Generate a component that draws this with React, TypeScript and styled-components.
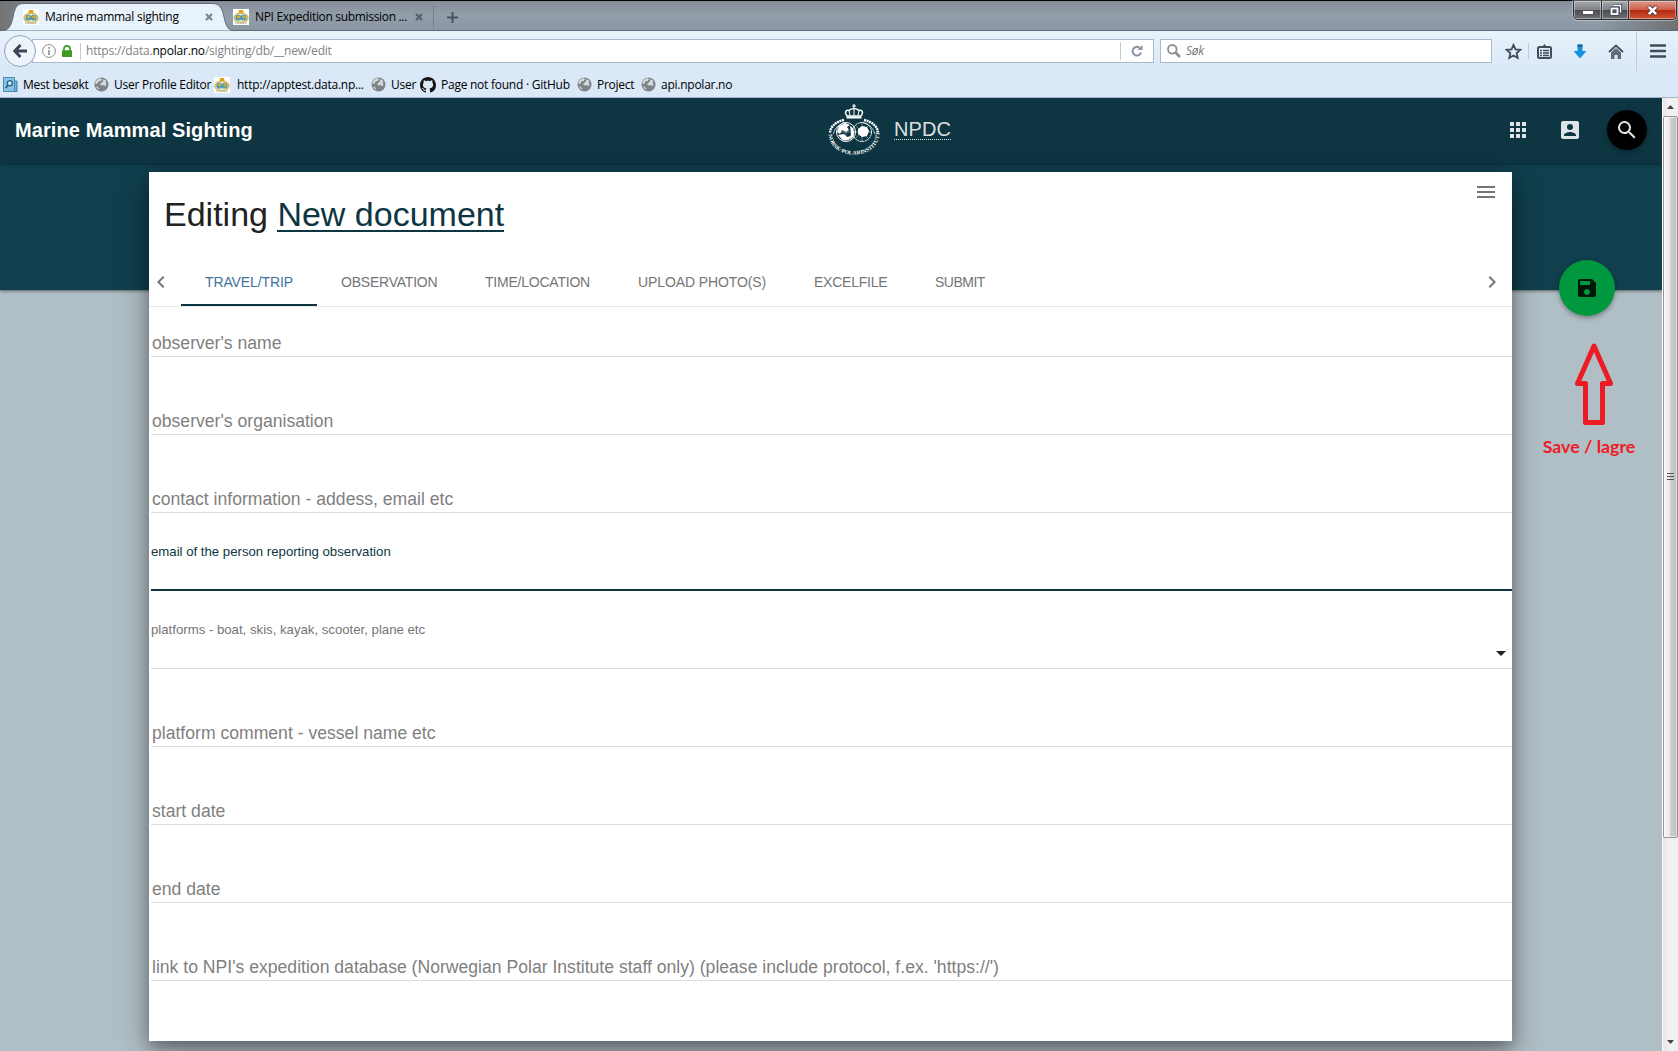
import React from "react";
import styled, { createGlobalStyle, css } from "styled-components";

const Global = createGlobalStyle`
  * { box-sizing: border-box; }
  body { margin: 0; overflow: hidden; background: #b0bec5; }
`;

const UI = `"Open Sans", "Noto Sans", sans-serif`;
const ARIAL = `"Liberation Sans", Arial, sans-serif`;

const Screen = styled.div`
  width: 1678px;
  height: 1051px;
  display: flex;
  flex-direction: column;
  font-family: ${ARIAL};
  overflow: hidden;
`;

/* ---------- browser chrome ---------- */

const TitleBar = styled.div`
  height: 31px;
  flex: none;
  display: flex;
  border-top: 1px solid #000;
  border-bottom: 1px solid #5d6b78;
  background: linear-gradient(90deg, rgba(110, 110, 110, 0.9) 0, rgba(110, 110, 110, 0) 50px, rgba(110, 110, 110, 0) 1600px, rgba(105, 105, 105, 0.85) 1678px),
    linear-gradient(#858f99, #929eaa 50%, #8b97a3);
`;

const TabShape = styled.svg`
  position: absolute;
  left: 0;
  top: 1px;
`;

const BrowserTab = styled.div<{ $w: number; $pad: number }>`
  position: relative;
  width: ${(p) => p.$w}px;
  padding: 2px 0 0 ${(p) => p.$pad}px;
  height: 29px;
  display: flex;
  align-items: center;
  flex: none;
`;

const ChromeText = styled.span<{ $w?: number; $ls?: number }>`
  position: relative;
  font: 12px/16px ${UI};
  letter-spacing: ${(p) => p.$ls ?? -0.25}px;
  color: #000;
  white-space: pre;
  ${(p) => p.$w && css`width: ${p.$w}px;`}
`;

const TabLabel = styled(ChromeText)`
  margin-left: 6px;
`;

const Glyph = styled.svg`
  display: block;
  flex: none;
  position: relative;
`;

const TabSeparator = styled.div`
  width: 1px;
  height: 22px;
  margin: 5px 13px 0 0;
  background: #74808b;
`;

const NewTab = styled.div`
  display: flex;
  align-items: center;
  height: 29px;
  padding-top: 3px;
`;

const WindowButtons = styled.div`
  display: flex;
  margin-left: auto;
  margin-right: 1px;
  width: 104px;
  height: 19px;
  border: 1px solid #2b2d33;
  border-top: 0;
  border-radius: 0 0 5px 5px;
  overflow: hidden;
  box-shadow: 0 0 0 1px rgba(255, 255, 255, 0.35);
`;

const WindowButton = styled.div<{ $w: number; $close?: boolean; $low?: boolean }>`
  width: ${(p) => p.$w}px;
  padding-top: ${(p) => (p.$low ? 4 : 0)}px;
  display: flex;
  align-items: center;
  justify-content: center;
  box-shadow: inset 0 0 0 1px rgba(255, 255, 255, 0.4);
  border-right: ${(p) => (p.$close ? "0" : "1px solid #2b2d33")};
  background: ${(p) =>
    p.$close
      ? "linear-gradient(#dc9a8c, #cf5f48 48%, #b72a10 52%, #cf5533)"
      : "linear-gradient(#a4a7ab, #80848a 48%, #4a4c50 52%, #6f7173)"};
`;

const NavArea = styled.div`
  height: 67px;
  flex: none;
  border-bottom: 1px solid #9fb3c9;
  background: linear-gradient(#e8f2fb, #dae8f7 60%);
`;

const NavRow = styled.div`
  height: 40px;
  display: flex;
  align-items: center;
  padding-left: 4px;
`;

const BackButton = styled.div`
  position: relative;
  z-index: 1;
  width: 32px;
  height: 32px;
  border-radius: 50%;
  border: 1px solid #8fa5c0;
  background: #edf4fc;
  display: flex;
  align-items: center;
  justify-content: center;
  flex: none;
`;

const UrlBar = styled.div`
  width: 1122px;
  height: 24px;
  margin-left: -4px;
  padding-left: 9px;
  display: flex;
  align-items: center;
  background: #fff;
  border: 1px solid #a8bace;
  flex: none;
`;

const Divider = styled.div<{ $h: number; $l: number; $r: number }>`
  width: 1px;
  height: ${(p) => p.$h}px;
  margin: 0 ${(p) => p.$r}px 0 ${(p) => p.$l}px;
  background: #c3cad2;
  flex: none;
`;

const UrlText = styled(ChromeText)`
  color: #7f7f7f;
  width: 959px;
  b { font-weight: 400; color: #000; }
`;

const SearchBox = styled.div`
  width: 332px;
  height: 24px;
  margin-left: 6px;
  padding-left: 6px;
  display: flex;
  align-items: center;
  gap: 5px;
  background: #fff;
  border: 1px solid #a8bace;
  flex: none;
`;

const SearchHint = styled(ChromeText)`
  font-style: italic;
  color: #757575;
`;

const NavIcon = styled.div<{ $w: number }>`
  width: ${(p) => p.$w}px;
  display: flex;
  justify-content: center;
  flex: none;
`;

const BookmarkRow = styled.div`
  height: 26px;
  display: flex;
  align-items: center;
  padding: 1px 0 0 3px;
`;

const Bookmark = styled.div<{ $w: number; $gap?: number }>`
  width: ${(p) => p.$w}px;
  display: flex;
  align-items: center;
  gap: ${(p) => p.$gap ?? 5}px;
  flex: none;
`;

/* ---------- page ---------- */

const Viewport = styled.div`
  flex: 1;
  display: flex;
  min-height: 0;
`;

const Page = styled.div`
  position: relative;
  width: 1662px;
  display: flex;
  flex-direction: column;
  background: #b0bec5;
  overflow: hidden;
`;

const Band = styled.div`
  position: absolute;
  left: 0;
  right: 0;
  top: 0;
  height: 192px;
  background: #103f4d;
  box-shadow: 0 1px 3px rgba(0, 0, 0, 0.5);
`;

const Toolbar = styled.header`
  position: relative;
  height: 65px;
  flex: none;
  display: flex;
  align-items: center;
  background: #0d3642;
  box-shadow: 0 1px 3px rgba(0, 0, 0, 0.45);
  padding: 0 4px 2px 15px;
`;

const AppTitle = styled.h1`
  margin: 0;
  width: 813px;
  font: 700 20px/24px ${ARIAL};
  letter-spacing: 0.1px;
  color: #fff;
`;

const Brand = styled.a`
  margin-left: 14px;
  height: 21px;
  font: 20px/21px ${ARIAL};
  letter-spacing: 0.1px;
  color: rgba(255, 255, 255, 0.87);
  border-bottom: 1px dotted rgba(255, 255, 255, 0.87);
`;

const ToolbarActions = styled.div`
  margin-left: auto;
  display: flex;
  align-items: center;
`;

const ActionSlot = styled.div<{ $w: number }>`
  width: ${(p) => p.$w}px;
  display: flex;
  justify-content: center;
`;

const SearchFab = styled.div`
  width: 40px;
  height: 40px;
  border-radius: 50%;
  background: #000;
  display: flex;
  align-items: center;
  justify-content: center;
  box-shadow: 0 2px 5px rgba(0, 0, 0, 0.3);
`;

const Card = styled.main`
  position: relative;
  width: 1363px;
  height: 869px;
  margin: 9px 0 0 149px;
  background: #fff;
  box-shadow: 0 6px 12px rgba(0, 0, 0, 0.2), 0 10px 28px rgba(0, 0, 0, 0.38);
`;

const CardHead = styled.div`
  display: flex;
  justify-content: space-between;
  height: 86px;
  padding: 0 14px 0 15px;
`;

const Heading = styled.h2`
  margin: 22px 0 0;
  font: 400 34px/40px ${ARIAL};
  color: #212121;
`;

const DocLink = styled.a`
  display: inline-block;
  height: 38px;
  line-height: 40px;
  vertical-align: top;
  color: #0d3642;
  border-bottom: 2px solid #0d3642;
`;

const MenuSlot = styled.div`
  margin-top: 8px;
`;

const TabBar = styled.nav`
  display: flex;
  align-items: stretch;
  height: 49px;
  border-bottom: 1px solid #e8e8e8;
`;

const Pager = styled.div<{ $end?: boolean }>`
  width: 32px;
  display: flex;
  align-items: center;
  ${(p) => p.$end && css`margin-left: auto;`}
`;

const FormTab = styled.div<{ $w: number; $ls: number; $active?: boolean }>`
  width: ${(p) => p.$w}px;
  padding-left: 24px;
  font: 14px/48px ${ARIAL};
  letter-spacing: ${(p) => p.$ls}px;
  white-space: nowrap;
  color: ${(p) => (p.$active ? "#40739e" : "#757575")};
  ${(p) => p.$active && css`box-shadow: inset 0 -2px #0d3642;`}
`;

const Fields = styled.div`
  padding-left: 2px;
  margin-top: -28px;
`;

const Field = styled.label<{ $kind?: string }>`
  display: flex;
  height: 78px;
  flex-direction: column;
  justify-content: flex-end;
  padding: 0 0 3px 1px;
  border-bottom: 1px solid #dedede;
  font: 17.6px/20px ${ARIAL};
  color: #7f7f7f;
  ${(p) =>
    p.$kind &&
    css`
      justify-content: flex-start;
      padding: 29px 0 0;
      font-size: 13.2px;
      line-height: 20px;
      color: #757575;
    `}
  ${(p) =>
    p.$kind === "focus" &&
    css`
      color: #0d3642;
      box-shadow: inset 0 -1px #0d3642;
      border-bottom-color: #0d3642;
    `}
`;

const Caret = styled.div`
  align-self: flex-end;
  margin: 11px 6px 0 0;
  border: 5px solid transparent;
  border-top-color: #212121;
  border-bottom: 0;
`;

const SaveFab = styled.div`
  position: absolute;
  left: 1559px;
  top: 162px;
  width: 56px;
  height: 56px;
  border-radius: 50%;
  background: #00983e;
  display: flex;
  align-items: center;
  justify-content: center;
  box-shadow: 0 2px 5px rgba(0, 0, 0, 0.35);
`;

const Note = styled.div`
  position: absolute;
  left: 1540px;
  top: 242px;
  width: 108px;
  display: flex;
  flex-direction: column;
  align-items: center;
  font: 700 17.8px/22px Lato, sans-serif;
  color: #ed1c24;
  white-space: nowrap;
`;

const NoteText = styled.span`
  margin: 9px 10px 0 0;
`;

const ScrollTrack = styled.div`
  width: 16px;
  border-left: 1px solid #fff;
  background: linear-gradient(90deg, #e6e6e6, #f1f1f1 40%);
  display: flex;
  flex-direction: column;
`;

const ScrollArrow = styled.div<{ $down?: boolean }>`
  height: 18px;
  display: flex;
  align-items: center;
  justify-content: center;
  ${(p) => p.$down && css`margin-top: auto;`}
`;

const ScrollThumb = styled.div`
  height: 722px;
  border: 1px solid #95959a;
  border-radius: 2px;
  background: linear-gradient(90deg, #f7f7f7, #e9e9eb 45%, #d0d0d4 50%, #bcbcc1);
  box-shadow: inset 0 0 0 1px rgba(255, 255, 255, 0.5);
  display: flex;
  align-items: center;
  justify-content: center;
`;

/* ---------- icons ---------- */

const Favicon = () => (
  <Glyph width="16" height="16" viewBox="0 0 16 16">
    <rect width="16" height="16" fill="#fff" />
    <path d="M6 1h4l.6 3H5.4z" fill="#d9a520" />
    <ellipse cx="8" cy="9" rx="7" ry="4.9" fill="#dfe5d2" stroke="#d8b548" strokeWidth="1.3" />
    <circle cx="5.3" cy="8.7" r="2.9" fill="#3f97c4" />
    <circle cx="10.7" cy="8.7" r="2.9" fill="#3f97c4" />
    <path d="M3.6 7.5l3-1 .6 2-2 1zM9 8l2.6-1.6 1.4 2-2 1.2zM4.6 10.4l2 .6M9.6 11l2-.8" fill="#d6b02c" stroke="#d6b02c" strokeWidth=".5" />
    <path d="M2 14.3h12" stroke="#aaa" strokeDasharray="1.5 1" />
  </Glyph>
);

const Globe = () => (
  <Glyph width="15" height="15" viewBox="0 0 15 15">
    <circle cx="7.5" cy="7.5" r="7" fill="#7f8386" />
    <path d="M1.300 7C1.300 4 4 1.300 7 1.300L8 2.500 6.500 4 4.500 4.500 3.500 6.500zM9.500 2l3 2-1 1.500 1 1-1 3-2-1.500-2 .5L6 7l2.500-2zM2 9.500l2 .5 1.500 2.500C4 12.500 2.500 11 2 9.500z" fill="#d3d9de" />
  </Glyph>
);

const GitHub = () => (
  <Glyph width="16" height="16" viewBox="0 0 16 16">
    <path
      fill="#161514"
      d="M8 0C3.580 0 0 3.580 0 8c0 3.540 2.290 6.530 5.470 7.590.4.070.55-.17.55-.38 0-.19-.01-.82-.01-1.490-2.010.37-2.530-.49-2.690-.94-.09-.23-.48-.94-.82-1.130-.28-.15-.68-.52-.01-.53.63-.01 1.080.58 1.230.82.72 1.210 1.870.87 2.330.66.07-.52.28-.87.51-1.070-1.780-.2-3.640-.89-3.640-3.950 0-.87.31-1.590.82-2.150-.08-.2-.36-1.020.08-2.120 0 0 .67-.21 2.200.82.64-.18 1.320-.27 2-.27s1.360.09 2 .27c1.530-1.040 2.200-.82 2.200-.82.44 1.100.16 1.920.08 2.120.51.56.82 1.270.82 2.150 0 3.070-1.870 3.750-3.650 3.950.29.25.54.73.54 1.480 0 1.070-.01 1.930-.01 2.200 0 .21.15.46.55.38A8.010 8.010 0 0 0 16 8c0-4.420-3.580-8-8-8z"
    />
  </Glyph>
);

const MostVisited = () => (
  <Glyph width="15" height="16" viewBox="0 0 15 16">
    <path d="M11 4h3v10.500h-3z" fill="#6fb0d4" stroke="#3e7fa8" />
    <path d="M.5.5h11v14H.5z" fill="#8cc3e2" stroke="#4a8ab3" />
    <circle cx="6.800" cy="6.300" r="2.600" fill="#c7e4f4" stroke="#235f8a" strokeWidth="1.300" />
    <path d="M5 8.300L2.600 11" stroke="#235f8a" strokeWidth="1.700" />
  </Glyph>
);

const CloseX = ({ c }: { c: string }) => (
  <Glyph width="8" height="8" viewBox="0 0 8 8">
    <path d="M1 1l6 6M7 1L1 7" stroke={c} strokeWidth="2.200" />
  </Glyph>
);

const Mat = ({ d, fill, size = 24 }: { d: string; fill: string; size?: number }) => (
  <Glyph width={size} height={size} viewBox="0 0 24 24">
    <path d={d} fill={fill} />
  </Glyph>
);

const P = {
  apps: "M4 8h4V4H4v4zm6 12h4v-4h-4v4zm-6 0h4v-4H4v4zm0-6h4v-4H4v4zm6 0h4v-4h-4v4zm6-10v4h4V4h-4zm-6 4h4V4h-4v4zm6 6h4v-4h-4v4zm0 6h4v-4h-4v4z",
  account: "M3 5v14a2 2 0 0 0 2 2h14a2 2 0 0 0 2-2V5a2 2 0 0 0-2-2H5a2 2 0 0 0-2 2zm12 4a3 3 0 1 1-6 0 3 3 0 0 1 6 0zm-9 8c0-2 4-3.100 6-3.100s6 1.100 6 3.100v1H6v-1z",
  search: "M15.500 14h-.79l-.28-.27A6.471 6.471 0 0 0 16 9.500 6.500 6.500 0 1 0 9.500 16c1.610 0 3.090-.59 4.230-1.570l.27.28v.79l5 4.990L20.490 19l-4.990-5zm-6 0C7.010 14 5 11.990 5 9.500S7.010 5 9.500 5 14 7.010 14 9.500 11.990 14 9.500 14z",
  menu: "M3 18h18v-2H3v2zm0-5h18v-2H3v2zm0-7v2h18V6H3z",
  save: "M17 3H5a2 2 0 0 0-2 2v14a2 2 0 0 0 2 2h14c1.100 0 2-.9 2-2V7l-4-4zm-5 16c-1.660 0-3-1.340-3-3s1.340-3 3-3 3 1.340 3 3-1.340 3-3 3zm3-10H5V5h10v4z",
  left: "M15.410 7.410L14 6l-6 6 6 6 1.410-1.410L10.830 12z",
  right: "M10 6L8.590 7.410 13.170 12l-4.580 4.590L10 18l6-6z",
};

const Crest = () => (
  <Glyph width="52" height="53" viewBox="0 0 52 53">
    <g fill="none" stroke="#fff">
      <path d="M26 1v5M24 3h4" strokeWidth="1.200" />
      <path d="M19 13c-3-4-1-6.500 2-5.500 2-2.500 8-2.500 10 0 3-1 5 1.500 2 5.500z" strokeWidth="1.400" />
      <path d="M22 12.500l-1-5M26 12.500V6M30 12.500l1-5" strokeWidth="1" />
      <path d="M18.500 14.500h15" strokeWidth="2" />
      <path d="M16 17C7 19 2.500 24 2 29.500M36 17c9 2 13.500 7 14 12.500" strokeWidth="2.400" strokeDasharray="2 .6" />
      <path d="M17.500 19.500C9.500 22 6 26 5.500 31M34.500 19.500C42.500 22 46 26 46.500 31" strokeWidth=".7" />
      <circle cx="18" cy="29" r="9.500" strokeWidth="1" />
      <circle cx="34" cy="29" r="9.500" strokeWidth="1" strokeDasharray="2 .5" />
      <path d="M24 29h19M34 20v18M27.500 22.500l13 13M40.500 22.500l-13 13M18 20v18M9 29h18" strokeWidth=".4" />
    </g>
    <path d="M11 23l6-3 5 2-3 2 2 3-3 2-4-2-2 4-3-2zM10 32l6-1 3 3 4-1-2 4-6 .5zM22 23c4 2 5 6 3 11l-3 3 1-7zM30 26l4-3 5 1 2 4-2 5-5 1-4-3z" fill="#fff" />
    <defs>
      <path id="crestArc" d="M.5 30.500C1 44 12 51.500 26 51.500S51 44 51.500 30.500" />
    </defs>
    <text fill="#fff" fontSize="5.400" fontWeight="700" fontFamily="Liberation Serif, serif">
      <textPath href="#crestArc" startOffset="1" textLength="74" lengthAdjust="spacingAndGlyphs">
        NORSK·POLARINSTITUTT
      </textPath>
    </text>
  </Glyph>
);

const bookmarks: { icon: React.ReactNode; text: string; w: number; gap?: number }[] = [
  { icon: <MostVisited />, text: "Mest besøkt", w: 91 },
  { icon: <Globe />, text: "User Profile Editor", w: 120 },
  { icon: <Favicon />, text: "http://apptest.data.np...", w: 157, gap: 7 },
  { icon: <Globe />, text: "User", w: 49 },
  { icon: <GitHub />, text: "Page not found · GitHub", w: 157 },
  { icon: <Globe />, text: "Project", w: 64 },
  { icon: <Globe />, text: "api.npolar.no", w: 100 },
];

const formTabs = [
  { text: "TRAVEL/TRIP", w: 136, ls: -0.12 },
  { text: "OBSERVATION", w: 144, ls: -0.22 },
  { text: "TIME/LOCATION", w: 153, ls: -0.22 },
  { text: "UPLOAD PHOTO(S)", w: 176, ls: -0.1 },
  { text: "EXCELFILE", w: 121, ls: -0.24 },
  { text: "SUBMIT", w: 98, ls: -0.5 },
];

const fields = [
  { text: "observer's name" },
  { text: "observer's organisation" },
  { text: "contact information - addess, email etc" },
  { text: "email of the person reporting observation", kind: "focus" },
  { text: "platforms - boat, skis, kayak, scooter, plane etc", kind: "select" },
  { text: "platform comment - vessel name etc" },
  { text: "start date" },
  { text: "end date" },
  { text: "link to NPI's expedition database (Norwegian Polar Institute staff only) (please include protocol, f.ex. 'https://')" },
];

export default function App() {
  return (
    <Screen>
      <Global />
      <TitleBar>
        <BrowserTab $w={233} $pad={23}>
          <TabShape width="236" height="29" viewBox="0 0 236 29">
            <path d="M0 29C9 29 11 24 13 15 15 5 17 1.500 24 1.500H212C219 1.500 222 5 224 15 226 24 228 29 236 29z" fill="#e8f2fb" stroke="#5d6b78" />
          </TabShape>
          <Favicon />
          <TabLabel $w={160}>Marine mammal sighting</TabLabel>
          <CloseX c="#7b8692" />
        </BrowserTab>
        <BrowserTab $w={200} $pad={0}>
          <Favicon />
          <TabLabel $w={160} $ls={-0.32}>NPI Expedition submission ...</TabLabel>
          <CloseX c="#56616d" />
        </BrowserTab>
        <TabSeparator />
        <NewTab>
          <Glyph width="11" height="11" viewBox="0 0 11 11">
            <path d="M5.500 0v11M0 5.500h11" stroke="#46525e" strokeWidth="2" />
          </Glyph>
        </NewTab>
        <WindowButtons>
          <WindowButton $w={28} $low>
            <Glyph width="12" height="6" viewBox="0 0 12 6">
              <rect x=".5" y="1.500" width="11" height="4" fill="#fff" stroke="#555" />
            </Glyph>
          </WindowButton>
          <WindowButton $w={27}>
            <Glyph width="13" height="12" viewBox="0 0 13 12">
              <path d="M4.500 1.500h7v7" fill="none" stroke="#444a5c" strokeWidth="3" />
              <path d="M4.500 1.500h7v7" fill="none" stroke="#fff" strokeWidth="1.300" />
              <rect x="2.500" y="4.500" width="6" height="5.500" fill="#555" stroke="#444a5c" strokeWidth="3.500" />
              <rect x="2.500" y="4.500" width="6" height="5.500" fill="#555" stroke="#fff" strokeWidth="1.800" />
            </Glyph>
          </WindowButton>
          <WindowButton $w={47} $close>
            <Glyph width="13" height="11" viewBox="0 0 13 11">
              <path d="M2.500 1.500l8 8M10.500 1.500l-8 8" stroke="#5b3a3e" strokeWidth="4.200" />
              <path d="M2.800 1.800l7.400 7.400M10.200 1.800l-7.400 7.400" stroke="#fff" strokeWidth="2.500" />
            </Glyph>
          </WindowButton>
        </WindowButtons>
      </TitleBar>

      <NavArea>
        <NavRow>
          <BackButton>
            <Glyph width="14" height="14" viewBox="0 0 14 14">
              <path d="M7.500 1L1.800 7l5.700 6M2 7h12" fill="none" stroke="#3c4654" strokeWidth="3" />
            </Glyph>
          </BackButton>
          <UrlBar>
            <Glyph width="14" height="14" viewBox="0 0 14 14">
              <circle cx="7" cy="7" r="6.400" fill="none" stroke="#8d8d8d" />
              <path d="M7 6v5M7 3v1.800" stroke="#8d8d8d" strokeWidth="1.600" />
            </Glyph>
            <Divider $h={0} $l={1} $r={4} />
            <Glyph width="10" height="12" viewBox="0 0 10 12">
              <path d="M2 6V3.800a3 3 0 0 1 6 0V6" fill="none" stroke="#3f9a24" strokeWidth="1.700" />
              <rect y="5.300" width="10" height="6.700" rx=".8" fill="#3f9a24" />
            </Glyph>
            <Divider $h={17} $l={8} $r={5} />
            <UrlText $ls={-0.2}>
              https://data.<b>npolar.no</b>/sighting/db/__new/edit
            </UrlText>
            <Divider $h={18} $l={75} $r={10} />
            <Glyph width="12" height="12" viewBox="0 0 12 12">
              <path d="M10 7.500A4.300 4.300 0 1 1 8.500 2.700" fill="none" stroke="#8893a3" strokeWidth="2" />
              <path d="M6.500 5h5V0z" fill="#8893a3" />
            </Glyph>
          </UrlBar>
          <SearchBox>
            <Glyph width="14" height="14" viewBox="0 0 14 14">
              <circle cx="5.300" cy="5.300" r="4.300" fill="none" stroke="#8f8f8f" strokeWidth="1.800" />
              <path d="M8.500 8.500L13 13" stroke="#8f8f8f" strokeWidth="2.600" />
            </Glyph>
            <SearchHint>Søk</SearchHint>
          </SearchBox>
          <NavIcon $w={42}>
            <Glyph width="17" height="17" viewBox="0 0 17 17">
              <path d="M8.500 1.800l2 4.500 4.800.5-3.600 3.300 1 4.900-4.200-2.500L4.300 15l1-4.900L1.700 6.800l4.800-.5z" fill="none" stroke="#424b58" strokeWidth="1.800" />
            </Glyph>
          </NavIcon>
          <Divider $h={16} $l={-6} $r={7} />
          <NavIcon $w={17}>
            <Glyph width="15" height="15" viewBox="0 0 15 15">
              <rect x="1" y="3" width="13" height="11" rx="1.500" fill="none" stroke="#424b58" strokeWidth="2" />
              <path d="M3.500 3.500V2h2.500l1.500-2L9 2h2.500v1.500z" fill="#424b58" />
              <path d="M3 6.500h2M6 6.500h6M3 9h2M6 9h6M3 11.500h2M6 11.500h6" stroke="#424b58" strokeWidth="1.300" />
            </Glyph>
          </NavIcon>
          <NavIcon $w={54}>
            <Glyph width="14" height="15" viewBox="0 0 14 15">
              <path d="M4.500.5h5V7h4L7 14.500.5 7h4z" fill="#1792dd" />
              <path d="M4.500.5h5V3h-5z" fill="#1b6a9a" />
            </Glyph>
          </NavIcon>
          <NavIcon $w={17}>
            <Glyph width="16" height="15" viewBox="0 0 16 15">
              <path d="M1 8l7-6.500L15 8" fill="none" stroke="#4a525e" strokeWidth="2" />
              <path d="M3 8.500L8 4l5 4.500V15H9.500v-4h-3v4H3z" fill="#626b77" />
            </Glyph>
          </NavIcon>
          <Divider $h={39} $l={12} $r={13} />
          <Glyph width="16" height="14" viewBox="0 0 16 14">
            <path d="M1 1.500h14M1 7h14M1 12.500h14" stroke="#424b58" strokeWidth="2.600" strokeLinecap="round" />
          </Glyph>
        </NavRow>
        <BookmarkRow>
          {bookmarks.map((b) => (
            <Bookmark key={b.text} $w={b.w} $gap={b.gap}>
              {b.icon}
              <ChromeText>{b.text}</ChromeText>
            </Bookmark>
          ))}
        </BookmarkRow>
      </NavArea>

      <Viewport>
        <Page>
          <Band />
          <Toolbar>
            <AppTitle>Marine Mammal Sighting</AppTitle>
            <Crest />
            <Brand>NPDC</Brand>
            <ToolbarActions>
              <ActionSlot $w={52}>
                <Mat d={P.apps} fill="#dfe5e7" />
              </ActionSlot>
              <ActionSlot $w={52}>
                <Mat d={P.account} fill="#dfe5e7" />
              </ActionSlot>
              <ActionSlot $w={62}>
                <SearchFab>
                  <Mat d={P.search} fill="#e6e6e6" />
                </SearchFab>
              </ActionSlot>
            </ToolbarActions>
          </Toolbar>

          <Card>
            <CardHead>
              <Heading>
                Editing <DocLink>New document</DocLink>
              </Heading>
              <MenuSlot>
                <Mat d={P.menu} fill="#757575" />
              </MenuSlot>
            </CardHead>
            <TabBar>
              <Pager>
                <Mat d={P.left} fill="#757575" />
              </Pager>
              {formTabs.map((t, i) => (
                <FormTab key={t.text} $w={t.w} $ls={t.ls} $active={i === 0}>
                  {t.text}
                </FormTab>
              ))}
              <Pager $end>
                <Mat d={P.right} fill="#757575" />
              </Pager>
            </TabBar>
            <Fields>
              {fields.map((f) => (
                <Field key={f.text} $kind={f.kind}>
                  {f.text}
                  {f.kind === "select" && <Caret />}
                </Field>
              ))}
            </Fields>
          </Card>

          <SaveFab>
            <Mat d={P.save} fill="#00170a" />
          </SaveFab>
          <Note>
            <Glyph width="40" height="86" viewBox="0 0 40 86">
              <path d="M20 6L3.500 43.500h8V82.500h17v-39h8z" fill="none" stroke="#ed1c24" strokeWidth="5" strokeLinejoin="round" />
            </Glyph>
            <NoteText>Save / lagre</NoteText>
          </Note>
        </Page>
        <ScrollTrack>
          <ScrollArrow>
            <Glyph width="7" height="4" viewBox="0 0 7 4">
              <path d="M0 4L3.500 0 7 4z" fill="#444" />
            </Glyph>
          </ScrollArrow>
          <ScrollThumb>
            <Glyph width="7" height="8" viewBox="0 0 7 8">
              <path d="M0 .5h7M0 3.500h7M0 6.500h7" stroke="#555" />
            </Glyph>
          </ScrollThumb>
          <ScrollArrow $down>
            <Glyph width="7" height="4" viewBox="0 0 7 4">
              <path d="M0 0l3.500 4L7 0z" fill="#444" />
            </Glyph>
          </ScrollArrow>
        </ScrollTrack>
      </Viewport>
    </Screen>
  );
}
